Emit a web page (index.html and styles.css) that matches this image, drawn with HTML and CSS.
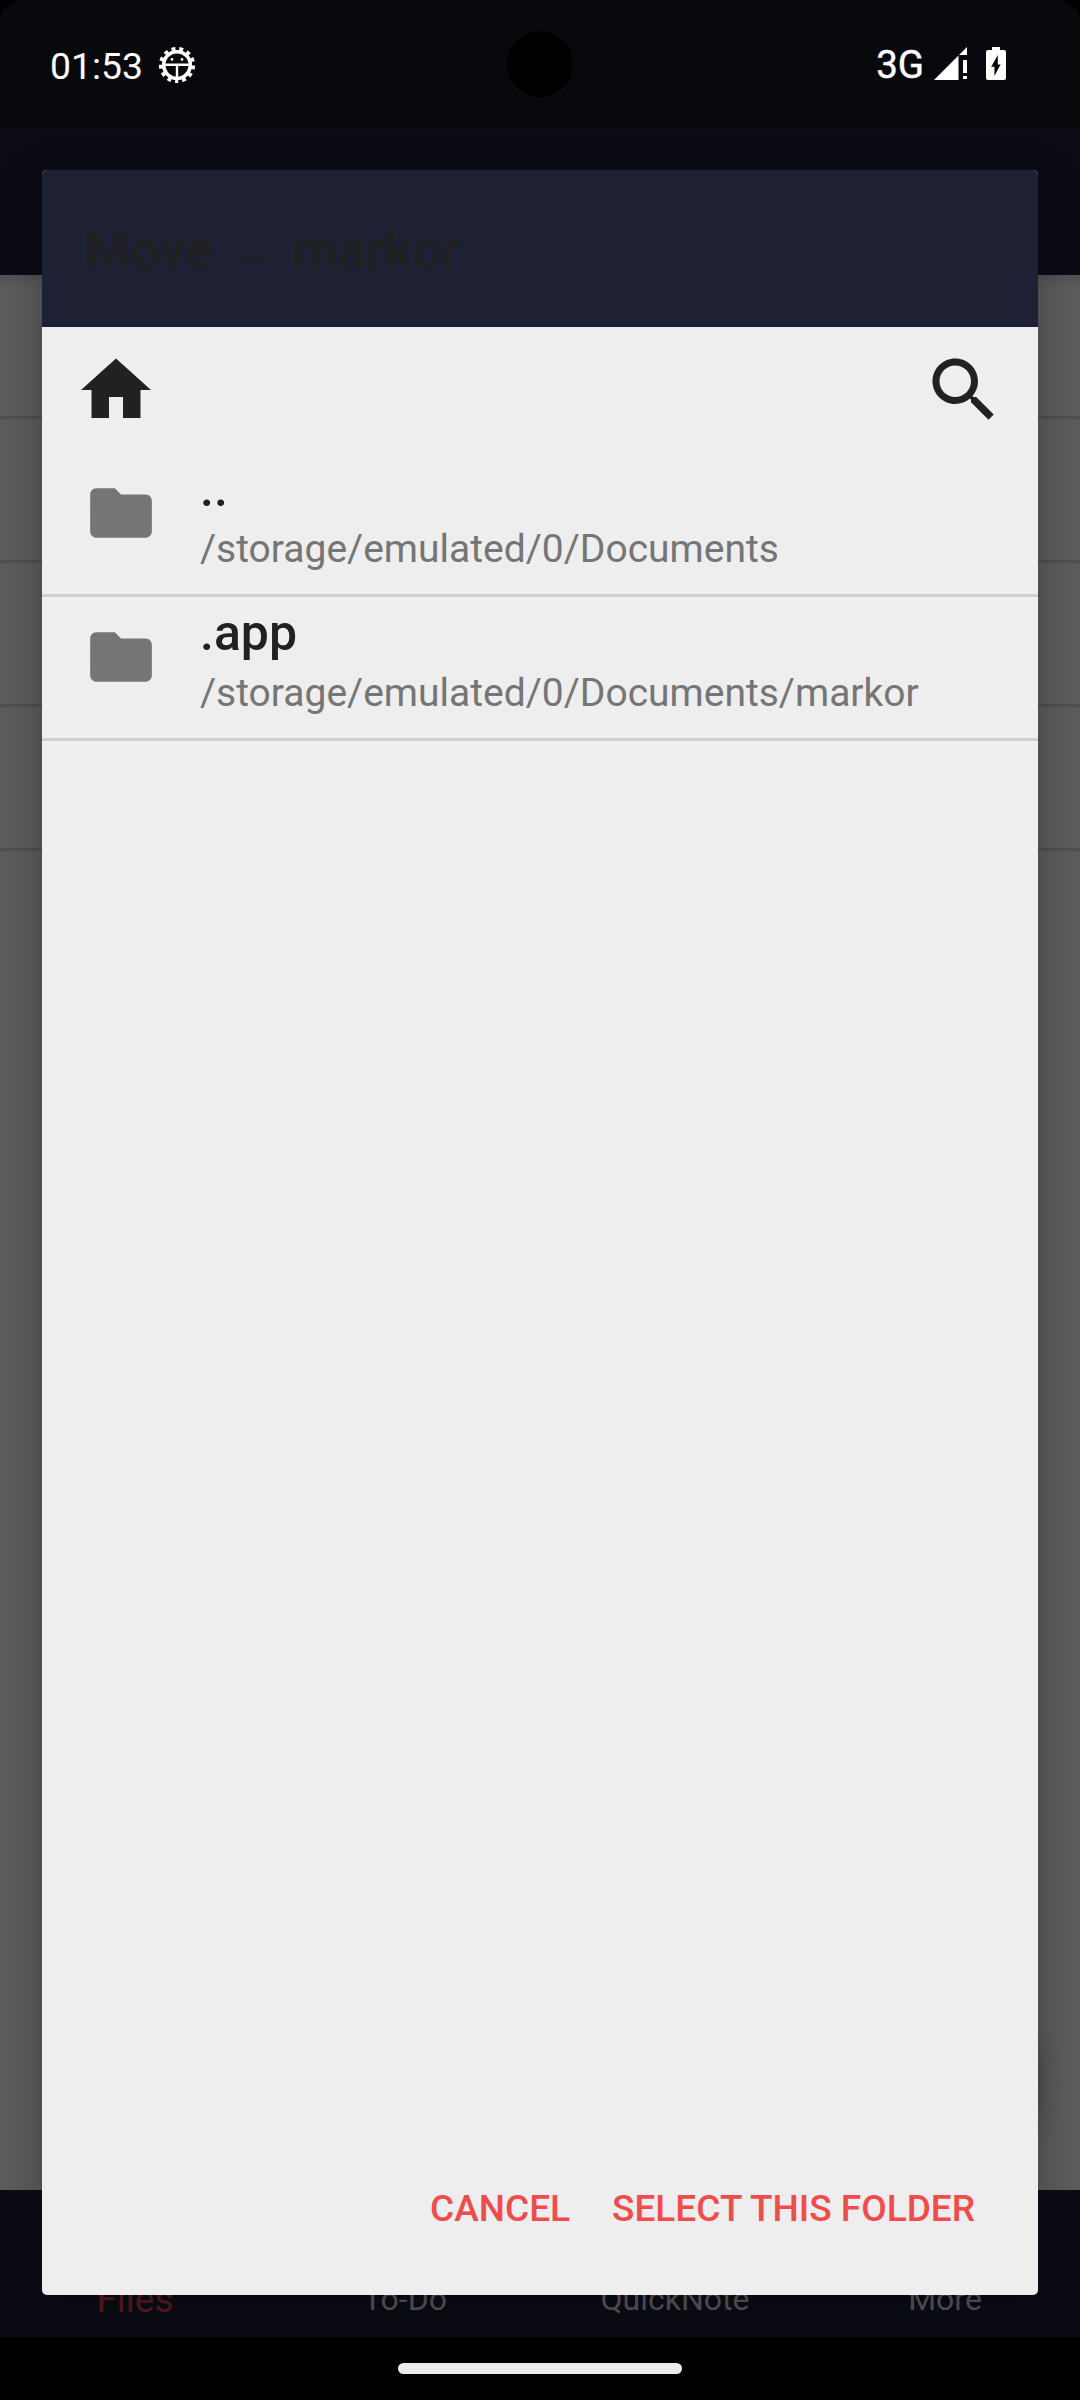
FILE: index.html
```html
<!DOCTYPE html>
<html lang="en">
<head>
<meta charset="utf-8">
<title>Move to folder</title>
<link rel="stylesheet" href="styles.css">
</head>
<body>
<div class="screen">
  <div class="app">
    <div class="status-space"></div>
    <div class="toolbar"></div>
    <div class="files">
      <div class="file"></div>
      <div class="file"></div>
      <div class="file"></div>
      <div class="file"></div>
      <div class="fab"></div>
    </div>
    <nav class="tabs">
      <span class="tab tab-active">Files</span>
      <span class="tab">To-Do</span>
      <span class="tab">QuickNote</span>
      <span class="tab">More</span>
    </nav>
    <div class="gesture"><div class="handle"></div></div>
  </div>

  <header class="status">
    <span class="clock">01:53</span>
    <svg class="bug" viewBox="-20 -20 40 40">
      <circle r="13.3" fill="none" stroke="#fff" stroke-width="3.6"/>
      <circle r="16.2" fill="none" stroke="#fff" stroke-width="3.8" stroke-dasharray="3.9 3.93" stroke-dashoffset="1.95" transform="rotate(90)"/>
      <path d="M-13-.2H13M0 0V13" stroke="#fff" stroke-width="2.4"/>
      <circle cx="-5" cy="-5.6" r="1.3" fill="#fff"/><circle cx="5" cy="-5.6" r="1.3" fill="#fff"/>
    </svg>
    <span class="network">3G</span>
    <svg class="signal" viewBox="0 0 33 33" fill="#fff">
      <path d="M0 33L24.5 8.5V33zM25 8L33 0V8zM29 13h4v13h-4zM29 29h4v3h-4z"/>
    </svg>
    <svg class="battery" viewBox="0 0 20 33" fill="#fff">
      <path fill-rule="evenodd" d="M6 0h8v3h4q2 0 2 2v26q0 2-2 2H2q-2 0-2-2V5q0-2 2-2h4zM11.8 8L5.2 19.7h3.2V29L14.6 17.4h-2.8z"/>
    </svg>
  </header>
  <div class="camera"></div>

  <section class="dialog">
    <h1 class="title">Move <span class="arrow">→</span> markor</h1>
    <div class="actions">
      <svg class="action" viewBox="0 0 24 24"><path d="M10 20v-6h4v6h5v-8h3L12 3 2 12h3v8z"/></svg>
      <svg class="action" viewBox="0 0 24 24"><path d="M15.5 14h-.79l-.28-.27C15.41 12.59 16 11.11 16 9.5 16 5.91 13.09 3 9.5 3S3 5.91 3 9.5 5.91 16 9.5 16c1.61 0 3.09-.59 4.23-1.57l.27.28v.79l5 4.99L20.49 19l-4.99-5zm-6 0C7.01 14 5 11.99 5 9.5S7.01 5 9.5 5 14 7.01 14 9.5 11.99 14 9.5 14z"/></svg>
    </div>
    <div class="row">
      <svg class="folder" viewBox="0 0 24 24"><path d="M10 4H4c-1.100 0-1.990.9-1.990 2L2 18c0 1.100.9 2 2 2h16c1.100 0 2-.9 2-2V8c0-1.100-.9-2-2-2h-8l-2-2z"/></svg>
      <div class="labels"><div class="name">..</div><div class="path">/storage/emulated/0/Documents</div></div>
    </div>
    <div class="row">
      <svg class="folder" viewBox="0 0 24 24"><path d="M10 4H4c-1.100 0-1.990.9-1.990 2L2 18c0 1.100.9 2 2 2h16c1.100 0 2-.9 2-2V8c0-1.100-.9-2-2-2h-8l-2-2z"/></svg>
      <div class="labels"><div class="name">.app</div><div class="path">/storage/emulated/0/Documents/markor</div></div>
    </div>
    <div class="buttons"><span>CANCEL</span><span>SELECT THIS FOLDER</span></div>
  </section>
</div>
</body>
</html>
```
FILE: styles.css
```css
* { box-sizing: border-box; }
body { margin: 0; background: #000; font-family: Roboto, sans-serif; }
.screen { position: relative; width: 1080px; height: 2400px; overflow: hidden; border-radius: 22px 22px 0 0; }

.app { display: flex; flex-direction: column; height: 100%; }
.status-space { height: 128px; background: #08090d; }
.toolbar { height: 147px; background: #0c0c15; }
.files { position: relative; flex: 1; overflow: hidden; background: #5d5d5d; box-shadow: inset 0 12px 12px -10px rgba(0,0,0,.2); }
.file { height: 144px; border-bottom: 3px solid #515151; }
.fab { position: absolute; right: 42px; bottom: 42px; width: 147px; height: 147px; border-radius: 50%; box-shadow: 0 10px 24px rgba(0,0,0,.3); }
.tabs { display: grid; grid-template-columns: repeat(4, 1fr); height: 147px; padding-top: 91px; background: #0c0c16; color: #5a5a5a; text-align: center; font-size: 32px; line-height: 37px; }
.tab-active { color: #5a1c1e; font-size: 37px; }
.gesture { display: flex; justify-content: center; height: 63px; padding-top: 26px; background: #000; }
.handle { width: 284px; height: 11px; border-radius: 6px; background: #ececec; }

.status { position: absolute; inset: 0 0 auto; display: flex; height: 128px; padding-left: 50px; color: #fff; font-size: 37.3px; line-height: 44px; }
.clock { padding-top: 44px; }
.bug { width: 40px; height: 40px; margin: 45px auto 0 14px; }
.network { padding-top: 43px; font-size: 38.5px; -webkit-text-stroke: .4px #fff; }
.signal { width: 33px; height: 33px; margin: 47px 19px 0 10px; }
.battery { width: 20px; height: 33px; margin: 47px 74px 0 0; }
.camera { position: absolute; left: 507px; top: 31px; width: 66px; height: 66px; border-radius: 50%; background: #000; }

.dialog { position: absolute; inset: 170px 42px 105px; display: flex; flex-direction: column; overflow: hidden; border-radius: 5px; background: #eee; box-shadow: 0 16px 50px rgba(0,0,0,.3); color: #212121; }
.title { height: 157px; margin: 0; padding: 49px 42px 0; background: #1e2034; font-size: 52.5px; line-height: 62px; font-weight: 500; color: #212121; white-space: pre; }
.arrow { font-family: "Liberation Sans", sans-serif; line-height: 1; }
.actions { display: flex; justify-content: space-between; height: 126px; padding: 21px 32px; }
.action { width: 84px; height: 84px; fill: #212121; }
.row { display: flex; height: 144px; padding-left: 42px; border-bottom: 3px solid #d0d0d0; }
.folder { width: 74px; height: 74px; margin-top: 23px; fill: #757575; }
.labels { padding-left: 42px; }
.name { margin-top: 7px; font-size: 50px; line-height: 58px; font-weight: 500; }
.path { margin-top: 8px; font-size: 39px; line-height: 46px; color: #757575; }
.buttons { display: flex; justify-content: flex-end; gap: 42px; margin-top: auto; padding: 0 63px 65px 0; font-size: 37px; line-height: 43px; font-weight: 500; color: #f04c4c; }
```
